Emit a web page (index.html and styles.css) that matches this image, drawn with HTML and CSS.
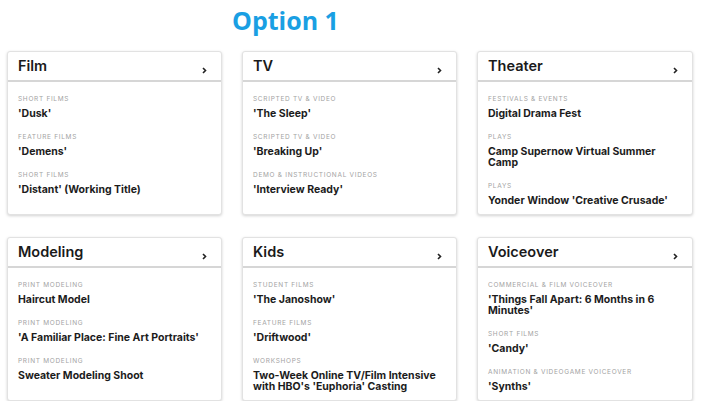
FILE: index.html
```html
<!DOCTYPE html>
<html>
<head>
<meta charset="utf-8">
<link rel="stylesheet" href="styles.css">
</head>
<body>
<h1 class="page-title">Option 1</h1>
<div class="grid">
  <div class="card">
    <div class="card-head"><span>Film</span><svg class="chev" width="5" height="7" viewBox="0 0 5 7"><polyline points="1,1 3.5,3.5 1,6" fill="none" stroke="#222" stroke-width="1.6"/></svg></div>
    <div class="card-body">
      <div class="item"><div class="label">Short Films</div><div class="name">'Dusk'</div></div>
      <div class="item"><div class="label">Feature Films</div><div class="name">'Demens'</div></div>
      <div class="item"><div class="label">Short Films</div><div class="name">'Distant' (Working Title)</div></div>
    </div>
  </div>
  <div class="card">
    <div class="card-head"><span>TV</span><svg class="chev" width="5" height="7" viewBox="0 0 5 7"><polyline points="1,1 3.5,3.5 1,6" fill="none" stroke="#222" stroke-width="1.6"/></svg></div>
    <div class="card-body">
      <div class="item"><div class="label">Scripted TV &amp; Video</div><div class="name">'The Sleep'</div></div>
      <div class="item"><div class="label">Scripted TV &amp; Video</div><div class="name">'Breaking Up'</div></div>
      <div class="item"><div class="label">Demo &amp; Instructional Videos</div><div class="name">'Interview Ready'</div></div>
    </div>
  </div>
  <div class="card">
    <div class="card-head"><span>Theater</span><svg class="chev" width="5" height="7" viewBox="0 0 5 7"><polyline points="1,1 3.5,3.5 1,6" fill="none" stroke="#222" stroke-width="1.6"/></svg></div>
    <div class="card-body">
      <div class="item"><div class="label">Festivals &amp; Events</div><div class="name">Digital Drama Fest</div></div>
      <div class="item"><div class="label">Plays</div><div class="name">Camp Supernow Virtual Summer Camp</div></div>
      <div class="item"><div class="label">Plays</div><div class="name">Yonder Window 'Creative Crusade'</div></div>
    </div>
  </div>
  <div class="card">
    <div class="card-head"><span>Modeling</span><svg class="chev" width="5" height="7" viewBox="0 0 5 7"><polyline points="1,1 3.5,3.5 1,6" fill="none" stroke="#222" stroke-width="1.6"/></svg></div>
    <div class="card-body">
      <div class="item"><div class="label">Print Modeling</div><div class="name">Haircut Model</div></div>
      <div class="item"><div class="label">Print Modeling</div><div class="name">'A Familiar Place: Fine Art Portraits'</div></div>
      <div class="item"><div class="label">Print Modeling</div><div class="name">Sweater Modeling Shoot</div></div>
    </div>
  </div>
  <div class="card">
    <div class="card-head"><span>Kids</span><svg class="chev" width="5" height="7" viewBox="0 0 5 7"><polyline points="1,1 3.5,3.5 1,6" fill="none" stroke="#222" stroke-width="1.6"/></svg></div>
    <div class="card-body">
      <div class="item"><div class="label">Student Films</div><div class="name">'The Janoshow'</div></div>
      <div class="item"><div class="label">Feature Films</div><div class="name">'Driftwood'</div></div>
      <div class="item"><div class="label">Workshops</div><div class="name">Two-Week Online TV/Film Intensive with HBO's 'Euphoria' Casting</div></div>
    </div>
  </div>
  <div class="card">
    <div class="card-head"><span>Voiceover</span><svg class="chev" width="5" height="7" viewBox="0 0 5 7"><polyline points="1,1 3.5,3.5 1,6" fill="none" stroke="#222" stroke-width="1.6"/></svg></div>
    <div class="card-body">
      <div class="item"><div class="label">Commercial &amp; Film Voiceover</div><div class="name">'Things Fall Apart: 6 Months in 6 Minutes'</div></div>
      <div class="item"><div class="label">Short Films</div><div class="name">'Candy'</div></div>
      <div class="item"><div class="label">Animation &amp; Videogame Voiceover</div><div class="name">'Synths'</div></div>
    </div>
  </div>
</div>
</body>
</html>
```
FILE: styles.css
```css
* { box-sizing: border-box; }
body {
  margin: 0;
  background: #fff;
  font-family: "Inter", "Open Sans", sans-serif;
  color: #1c1c1c;
}
.page-title {
  margin: 0;
  padding: 4px 0 0 232px;
  height: 51px;
  font-family: "Open Sans", sans-serif;
  font-weight: 700;
  font-size: 25px;
  line-height: 32px;
  color: #1a9fe3;
}
.grid {
  display: grid;
  grid-template-columns: 215px 215px 216px;
  grid-auto-rows: 164px;
  column-gap: 20px;
  row-gap: 22px;
  padding-left: 7px;
}
.card {
  border: 1px solid #e2e2e2;
  border-radius: 3px;
  box-shadow: 0 1px 3px rgba(0,0,0,0.18);
  background: #fff;
  overflow: hidden;
}
.card-head {
  height: 30px;
  border-bottom: 2px solid #d6d6d6;
  display: flex;
  align-items: center;
  justify-content: space-between;
  padding: 0 14px 0 10px;
  font-size: 14.5px;
  font-weight: 600;
  color: #1a1a1a;
}
.card-head span { margin-top: -2px; }
.chev { margin-top: 8px; }
.card-body {
  padding: 13px 10px 0 10px;
  display: flex;
  flex-direction: column;
  gap: 14px;
}
.label {
  font-size: 6.5px;
  text-transform: uppercase;
  letter-spacing: 0.7px;
  color: #a3a3a3;
  line-height: 9px;
  margin-bottom: 4px;
}
.name {
  font-size: 10.5px;
  font-weight: 700;
  line-height: 11px;
  color: #1c1c1c;
}
```
